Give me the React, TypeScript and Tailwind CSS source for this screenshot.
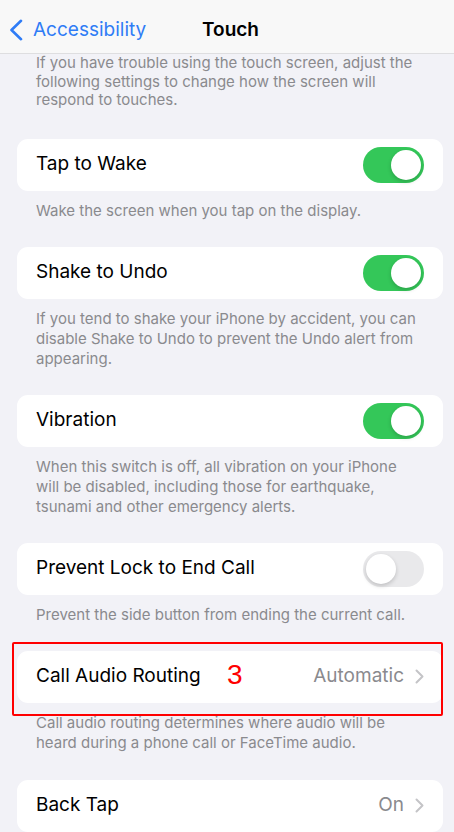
import React from "react";

const font = { fontFamily: 'Inter, "Noto Sans", sans-serif' };

const Toggle = ({ on }: { on: boolean }) => (
  <div
    className={`w-[61px] h-[36px] rounded-full p-[3px] flex ${
      on ? "bg-[#34c759] justify-end" : "bg-[#e9e9eb] justify-start"
    }`}
  >
    <div className="w-[30px] h-[30px] rounded-full bg-white shadow-[0_2px_4px_rgba(0,0,0,0.18)]" />
  </div>
);

const Chevron = () => (
  <svg width="9" height="15" viewBox="0 0 9 15" fill="none">
    <path d="M1.5 1.5L7.5 7.5L1.5 13.5" stroke="#c4c4c7" strokeWidth="2" strokeLinecap="round" strokeLinejoin="round" />
  </svg>
);

const Card = ({ children }: { children: React.ReactNode }) => (
  <div className="ml-[17px] mr-[11px] h-[52px] bg-white rounded-[11px] pl-[19px] pr-[19px] flex items-center justify-between">
    {children}
  </div>
);

const Footer = ({ children }: { children: React.ReactNode }) => (
  <p className="px-[36px] pt-[10px] text-[15px] leading-[20px] text-[#8a8a8e]">{children}</p>
);

export default function App() {
  return (
    <div className="w-[454px] h-[832px] overflow-hidden bg-[#f2f2f7]" style={font}>
      <header className="h-[54px] bg-[#f8f8f8] border-b border-[#dedee0] relative flex items-center pt-[7px]">
        <div className="flex items-center pl-[9px] gap-[10px] text-[#2f7cf6] text-[19px]">
          <svg width="14" height="22" viewBox="0 0 14 22" fill="none">
            <path d="M12 1.8L2.5 11L12 20.2" stroke="#2f7cf6" strokeWidth="2.6" strokeLinecap="round" strokeLinejoin="round" />
          </svg>
          <span>Accessibility</span>
        </div>
        <span className="absolute left-[202px] text-[19px] font-semibold text-black">Touch</span>
      </header>

      <p className="px-[36px] text-[15px] leading-[18.5px] text-[#8a8a8e]">
        If you have trouble using the touch screen, adjust the following settings to change how the screen will respond to touches.
      </p>

      <div className="mt-[29px]">
        <Card>
          <span className="text-[19px] text-black">Tap to Wake</span>
          <Toggle on />
        </Card>
        <Footer>Wake the screen when you tap on the display.</Footer>
      </div>

      <div className="mt-[26px]">
        <Card>
          <span className="text-[19px] text-black">Shake to Undo</span>
          <Toggle on />
        </Card>
        <Footer>
          If you tend to shake your iPhone by accident, you can disable Shake to Undo to prevent the Undo alert from appearing.
        </Footer>
      </div>

      <div className="mt-[26px]">
        <Card>
          <span className="text-[19px] text-black">Vibration</span>
          <Toggle on />
        </Card>
        <Footer>
          When this switch is off, all vibration on your iPhone will be disabled, including those for earthquake, tsunami and other emergency alerts.
        </Footer>
      </div>

      <div className="mt-[26px]">
        <Card>
          <span className="text-[19px] text-black">Prevent Lock to End Call</span>
          <Toggle on={false} />
        </Card>
        <Footer>Prevent the side button from ending the current call.</Footer>
      </div>

      <div className="mt-[26px] relative">
        <Card>
          <span className="text-[19px] text-black">Call Audio Routing</span>
          <div className="flex items-center gap-[11px]">
            <span className="text-[19px] text-[#8a8a8e]">Automatic</span>
            <Chevron />
          </div>
        </Card>
        <span
          className="absolute left-[227px] top-[3px] text-[28px] text-[#ff0000]"
          style={{ fontFamily: '"Liberation Sans", sans-serif' }}
        >
          3
        </span>
        <div className="absolute left-[12px] top-[-9px] w-[431px] h-[74px] border-2 border-[#ff0000] rounded-[2px]" />
        <Footer>
          Call audio routing determines where audio will be heard during a phone call or FaceTime audio.
        </Footer>
      </div>

      <div className="mt-[27px]">
        <Card>
          <span className="text-[19px] text-black">Back Tap</span>
          <div className="flex items-center gap-[11px]">
            <span className="text-[19px] text-[#8a8a8e]">On</span>
            <Chevron />
          </div>
        </Card>
      </div>
    </div>
  );
}
